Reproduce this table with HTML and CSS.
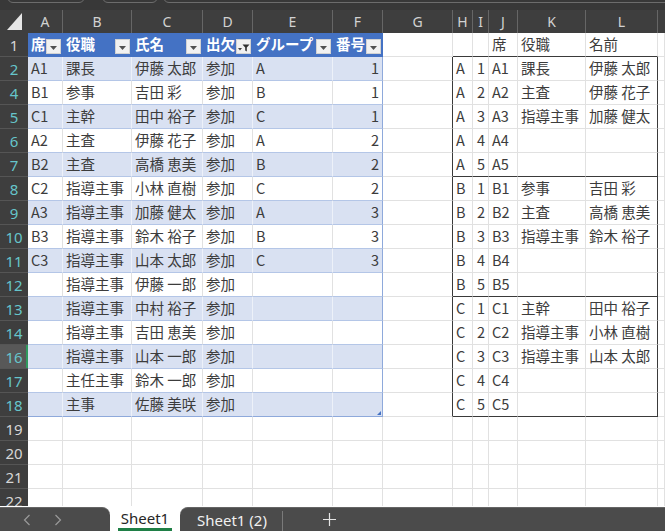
FILE: index.html
```html
<!DOCTYPE html>
<html lang="ja">
<head>
<meta charset="utf-8">
<link rel="stylesheet" href="styles.css">
</head>
<body>
<div class="app">
  <div class="topbar"><div class="pill p1"></div><div class="pill p2"></div><div class="pill p3"></div></div>
  <div class="sheet">
    <div class="grid">
      <!-- column headers -->
      <div class="ch corner"><svg width="28" height="23" viewBox="0 0 28 23"><path d="M22 3V20H7Z" fill="#e6e6e6"/></svg></div>
      <div class="ch">A</div><div class="ch">B</div><div class="ch">C</div><div class="ch">D</div><div class="ch">E</div><div class="ch">F</div><div class="ch">G</div><div class="ch">H</div><div class="ch">I</div><div class="ch">J</div><div class="ch">K</div><div class="ch">L</div><div class="ch last"></div>

      <!-- row 1 -->
      <div class="rh w">1</div>
      <div class="c th">席<span class="fb"><svg width="7" height="4" viewBox="0 0 7 4"><path d="M0 0H7L3.5 4Z" fill="#505050"/></svg></span></div>
      <div class="c th">役職<span class="fb"><svg width="7" height="4" viewBox="0 0 7 4"><path d="M0 0H7L3.5 4Z" fill="#505050"/></svg></span></div>
      <div class="c th">氏名<span class="fb"><svg width="7" height="4" viewBox="0 0 7 4"><path d="M0 0H7L3.5 4Z" fill="#505050"/></svg></span></div>
      <div class="c th">出欠<span class="fb"><svg width="12" height="10" viewBox="0 0 12 10"><path d="M0 5H4L2 7.5Z" fill="#404040"/><path d="M4.5 1.5H11.5L8.8 4.6V8.5L7.2 7.5V4.6Z" fill="#303030"/></svg></span></div>
      <div class="c th">グループ<span class="fb"><svg width="7" height="4" viewBox="0 0 7 4"><path d="M0 0H7L3.5 4Z" fill="#505050"/></svg></span></div>
      <div class="c th thf">番号<span class="fb"><svg width="7" height="4" viewBox="0 0 7 4"><path d="M0 0H7L3.5 4Z" fill="#505050"/></svg></span></div>
      <div class="c"></div>
      <div class="c bb"></div><div class="c bb"></div><div class="c bb">席</div><div class="c bb">役職</div><div class="c bb">名前</div>
      <div class="c"></div>

      <!-- row 2 -->
      <div class="rh">2</div>
      <div class="c t b">A1</div><div class="c t b">課長</div><div class="c t b">伊藤 太郎</div><div class="c t b">参加</div><div class="c t b">A</div><div class="c t b tf r">1</div>
      <div class="c gr"></div>
      <div class="c">A</div><div class="c r">1</div><div class="c">A1</div><div class="c">課長</div><div class="c lr">伊藤 太郎</div>
      <div class="c"></div>

      <!-- row 4 -->
      <div class="rh">4</div>
      <div class="c t">B1</div><div class="c t">参事</div><div class="c t">吉田 彩</div><div class="c t">参加</div><div class="c t">B</div><div class="c t tf r">1</div>
      <div class="c gr"></div>
      <div class="c">A</div><div class="c r">2</div><div class="c">A2</div><div class="c">主査</div><div class="c lr">伊藤 花子</div>
      <div class="c"></div>

      <!-- row 5 -->
      <div class="rh">5</div>
      <div class="c t b">C1</div><div class="c t b">主幹</div><div class="c t b">田中 裕子</div><div class="c t b">参加</div><div class="c t b">C</div><div class="c t b tf r">1</div>
      <div class="c gr"></div>
      <div class="c">A</div><div class="c r">3</div><div class="c">A3</div><div class="c">指導主事</div><div class="c lr">加藤 健太</div>
      <div class="c"></div>

      <!-- row 6 -->
      <div class="rh">6</div>
      <div class="c t">A2</div><div class="c t">主査</div><div class="c t">伊藤 花子</div><div class="c t">参加</div><div class="c t">A</div><div class="c t tf r">2</div>
      <div class="c gr"></div>
      <div class="c">A</div><div class="c r">4</div><div class="c">A4</div><div class="c"></div><div class="c lr"></div>
      <div class="c"></div>

      <!-- row 7 -->
      <div class="rh">7</div>
      <div class="c t b">B2</div><div class="c t b">主査</div><div class="c t b">高橋 恵美</div><div class="c t b">参加</div><div class="c t b">B</div><div class="c t b tf r">2</div>
      <div class="c gr"></div>
      <div class="c bb">A</div><div class="c r bb">5</div><div class="c bb">A5</div><div class="c bb"></div><div class="c lr bb"></div>
      <div class="c"></div>

      <!-- row 8 -->
      <div class="rh">8</div>
      <div class="c t">C2</div><div class="c t">指導主事</div><div class="c t">小林 直樹</div><div class="c t">参加</div><div class="c t">C</div><div class="c t tf r">2</div>
      <div class="c gr"></div>
      <div class="c">B</div><div class="c r">1</div><div class="c">B1</div><div class="c">参事</div><div class="c lr">吉田 彩</div>
      <div class="c"></div>

      <!-- row 9 -->
      <div class="rh">9</div>
      <div class="c t b">A3</div><div class="c t b">指導主事</div><div class="c t b">加藤 健太</div><div class="c t b">参加</div><div class="c t b">A</div><div class="c t b tf r">3</div>
      <div class="c gr"></div>
      <div class="c">B</div><div class="c r">2</div><div class="c">B2</div><div class="c">主査</div><div class="c lr">高橋 恵美</div>
      <div class="c"></div>

      <!-- row 10 -->
      <div class="rh">10</div>
      <div class="c t">B3</div><div class="c t">指導主事</div><div class="c t">鈴木 裕子</div><div class="c t">参加</div><div class="c t">B</div><div class="c t tf r">3</div>
      <div class="c gr"></div>
      <div class="c">B</div><div class="c r">3</div><div class="c">B3</div><div class="c">指導主事</div><div class="c lr">鈴木 裕子</div>
      <div class="c"></div>

      <!-- row 11 -->
      <div class="rh">11</div>
      <div class="c t b">C3</div><div class="c t b">指導主事</div><div class="c t b">山本 太郎</div><div class="c t b">参加</div><div class="c t b">C</div><div class="c t b tf r">3</div>
      <div class="c gr"></div>
      <div class="c">B</div><div class="c r">4</div><div class="c">B4</div><div class="c"></div><div class="c lr"></div>
      <div class="c"></div>

      <!-- row 12 -->
      <div class="rh">12</div>
      <div class="c t"></div><div class="c t">指導主事</div><div class="c t">伊藤 一郎</div><div class="c t">参加</div><div class="c t"></div><div class="c t tf r"></div>
      <div class="c gr"></div>
      <div class="c bb">B</div><div class="c r bb">5</div><div class="c bb">B5</div><div class="c bb"></div><div class="c lr bb"></div>
      <div class="c"></div>

      <!-- row 13 -->
      <div class="rh">13</div>
      <div class="c t b"></div><div class="c t b">指導主事</div><div class="c t b">中村 裕子</div><div class="c t b">参加</div><div class="c t b"></div><div class="c t b tf r"></div>
      <div class="c gr"></div>
      <div class="c">C</div><div class="c r">1</div><div class="c">C1</div><div class="c">主幹</div><div class="c lr">田中 裕子</div>
      <div class="c"></div>

      <!-- row 14 -->
      <div class="rh">14</div>
      <div class="c t"></div><div class="c t">指導主事</div><div class="c t">吉田 恵美</div><div class="c t">参加</div><div class="c t"></div><div class="c t tf r"></div>
      <div class="c gr"></div>
      <div class="c">C</div><div class="c r">2</div><div class="c">C2</div><div class="c">指導主事</div><div class="c lr">小林 直樹</div>
      <div class="c"></div>

      <!-- row 16 -->
      <div class="rh sel">16</div>
      <div class="c t b"></div><div class="c t b">指導主事</div><div class="c t b">山本 一郎</div><div class="c t b">参加</div><div class="c t b"></div><div class="c t b tf r"></div>
      <div class="c gr"></div>
      <div class="c">C</div><div class="c r">3</div><div class="c">C3</div><div class="c">指導主事</div><div class="c lr">山本 太郎</div>
      <div class="c"></div>

      <!-- row 17 -->
      <div class="rh">17</div>
      <div class="c t"></div><div class="c t">主任主事</div><div class="c t">鈴木 一郎</div><div class="c t">参加</div><div class="c t"></div><div class="c t tf r"></div>
      <div class="c gr"></div>
      <div class="c">C</div><div class="c r">4</div><div class="c">C4</div><div class="c"></div><div class="c lr"></div>
      <div class="c"></div>

      <!-- row 18 -->
      <div class="rh">18</div>
      <div class="c t b tl"></div><div class="c t b tl">主事</div><div class="c t b tl">佐藤 美咲</div><div class="c t b tl">参加</div><div class="c t b tl"></div><div class="c t b tf tl r handle"></div>
      <div class="c gr"></div>
      <div class="c bb">C</div><div class="c r bb">5</div><div class="c bb">C5</div><div class="c bb"></div><div class="c lr bb"></div>
      <div class="c"></div>

      <!-- rows 19-22 -->
      <div class="rh w">19</div>
      <div class="c"></div><div class="c"></div><div class="c"></div><div class="c"></div><div class="c"></div><div class="c"></div><div class="c"></div><div class="c"></div><div class="c"></div><div class="c"></div><div class="c"></div><div class="c"></div><div class="c"></div>
      <div class="rh w">20</div>
      <div class="c"></div><div class="c"></div><div class="c"></div><div class="c"></div><div class="c"></div><div class="c"></div><div class="c"></div><div class="c"></div><div class="c"></div><div class="c"></div><div class="c"></div><div class="c"></div><div class="c"></div>
      <div class="rh w">21</div>
      <div class="c"></div><div class="c"></div><div class="c"></div><div class="c"></div><div class="c"></div><div class="c"></div><div class="c"></div><div class="c"></div><div class="c"></div><div class="c"></div><div class="c"></div><div class="c"></div><div class="c"></div>
      <div class="rh w">22</div>
      <div class="c"></div><div class="c"></div><div class="c"></div><div class="c"></div><div class="c"></div><div class="c"></div><div class="c"></div><div class="c"></div><div class="c"></div><div class="c"></div><div class="c"></div><div class="c"></div><div class="c"></div>
    </div>
  </div>
  <div class="tabs">
    <div class="nav">
      <svg class="chev" width="8" height="12" viewBox="0 0 8 12"><path d="M6.5 1L1.5 6L6.5 11" fill="none" stroke="#9a9a9a" stroke-width="1.2"/></svg>
      <svg class="chev" width="8" height="12" viewBox="0 0 8 12"><path d="M1.5 1L6.5 6L1.5 11" fill="none" stroke="#9a9a9a" stroke-width="1.2"/></svg>
    </div>
    <div class="tab-active"><span class="tab-name">Sheet1</span></div>
    <div class="rest">
      <span class="tab-other">Sheet1 (2)</span>
      <span class="tab-sep"></span>
      <svg class="plus" width="13" height="13" viewBox="0 0 13 13"><path d="M6.5 0V13M0 6.5H13" stroke="#e6e6e6" stroke-width="1.2"/></svg>
    </div>
  </div>
</div>
</body>
</html>
```

FILE: styles.css
```css
html, body {
  margin: 0;
  padding: 0;
  height: 100%;
  overflow: hidden;
  background: #ffffff;
}

body {
  font-family: "Noto Sans CJK JP", "Noto Sans", sans-serif;
}

.app {
  display: flex;
  flex-direction: column;
  height: 531px;
}

/* top strip */
.topbar {
  height: 10px;
  flex: none;
  box-sizing: border-box;
  background: #383838;
  display: flex;
  align-items: flex-end;
  padding: 0 0 7px 7px;
  overflow: hidden;
}

.pill {
  flex: none;
  height: 20px;
  box-sizing: border-box;
  border: 1px solid #6c6c6c;
  border-radius: 6px;
}

.p1 { width: 78px; }
.p2 { width: 56px; margin-left: 17px; }
.p3 { width: 520px; margin-left: 5px; }

/* sheet grid */
.sheet {
  flex: 1;
  min-height: 0;
  overflow: hidden;
}

.grid {
  display: grid;
  grid-template-columns: 28px 35px 69px 71px 50px 80px 50px 70px 20px 16px 29px 68px 72px 1fr;
  grid-template-rows: 23px;
  grid-auto-rows: 24px;
}

.ch {
  background: #3e3e3e;
  color: #d2d2d2;
  font-family: "Noto Sans", sans-serif;
  font-size: 14px;
  display: flex;
  align-items: center;
  justify-content: center;
  box-sizing: border-box;
  border-right: 1px solid #666666;
}

.ch.corner {
  border-right: none;
  justify-content: flex-start;
}

.ch.corner svg {
  display: block;
}

.ch.last {
  border-right: none;
}

.rh {
  background: #3e3e3e;
  color: #66c5cb;
  font-family: "Noto Sans", sans-serif;
  font-size: 15px;
  display: flex;
  align-items: center;
  justify-content: center;
  box-sizing: border-box;
  border-bottom: 1px solid #555555;
}

.rh.w {
  color: #d6d6d6;
}

.rh.sel {
  background: #585858;
  box-shadow: inset -2px 0 0 #2f9a5e;
}

.c {
  box-sizing: border-box;
  border-right: 1px solid #e1e1e1;
  border-bottom: 1px solid #e1e1e1;
  padding: 0 3px;
  font-size: 14.5px;
  line-height: 1;
  color: #3c3c3c;
  display: flex;
  align-items: center;
  white-space: nowrap;
  overflow: hidden;
}

.c.r {
  justify-content: flex-end;
}

/* table (A:F) */
.th {
  background: #4472c4;
  color: #ffffff;
  font-weight: bold;
  border-right-color: #4472c4;
  border-bottom-color: #4472c4;
  padding-right: 0;
  justify-content: space-between;
}

.fb {
  flex: none;
  width: 15px;
  height: 15px;
  box-sizing: border-box;
  background: #f1f1f1;
  border: 1px solid #d2d2d2;
  display: flex;
  align-items: center;
  justify-content: center;
  align-self: flex-end;
  margin: 0 1px 2px 0;
}

.fb svg {
  display: block;
  margin-top: 2px;
}

.t {
  border-bottom-color: #b4c6e7;
}

.t.b {
  background: #d9e1f2;
  border-right-color: #edf1f9;
}

.t.tf {
  border-right-color: #8ea9db;
}

.t.tl {
  border-bottom-color: #8ea9db;
}

.handle {
  position: relative;
}

.handle::after {
  content: "";
  position: absolute;
  right: 1px;
  bottom: 1px;
  border-style: solid;
  border-width: 0 0 4px 4px;
  border-color: transparent transparent #4472c4 transparent;
}

/* right-hand boxed list */
.gr {
  border-right-color: #3a3a3a;
}

.lr {
  border-right-color: #3a3a3a;
}

.bb {
  border-bottom-color: #3a3a3a;
}

/* sheet tabs */
.tabs {
  height: 25px;
  flex: none;
  display: flex;
  background: #ffffff;
  font-family: "Noto Sans", sans-serif;
  font-size: 15px;
}

.nav {
  width: 110px;
  flex: none;
  margin-top: 1px;
  box-sizing: border-box;
  background: #4b4b4b;
  border-top: 1px solid #656565;
  border-top-right-radius: 8px;
  display: flex;
  align-items: center;
  padding-left: 23px;
  gap: 23px;
}

.chev {
  display: block;
}

.tab-active {
  width: 70px;
  flex: none;
  display: flex;
  justify-content: center;
}

.tab-name {
  display: flex;
  align-items: center;
  padding: 0 3px;
  color: #262626;
  border-bottom: 3px solid #1f7f46;
  box-sizing: border-box;
  height: 25px;
  padding-top: 1px;
}

.rest {
  flex: 1;
  margin-top: 1px;
  box-sizing: border-box;
  background: #4b4b4b;
  border-top: 1px solid #656565;
  border-top-left-radius: 8px;
  display: flex;
  align-items: center;
  padding-left: 17px;
  color: #f0f0f0;
}

.tab-other {
  padding-top: 1px;
}

.tab-sep {
  width: 1px;
  height: 20px;
  background: #7a7a7a;
  align-self: flex-end;
  margin-left: 15px;
}

.plus {
  display: block;
  margin-left: 40px;
}
```
